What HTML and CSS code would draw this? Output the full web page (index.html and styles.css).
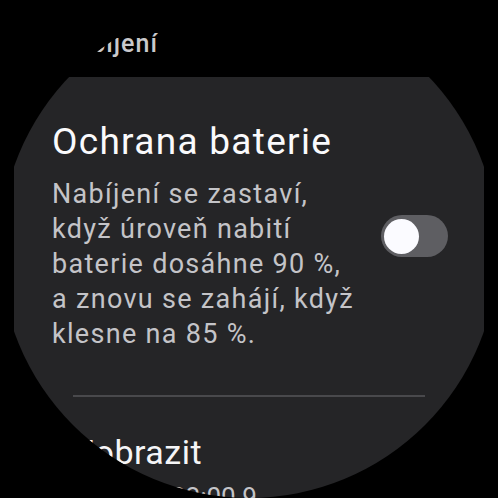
FILE: index.html
```html
<!DOCTYPE html>
<html lang="cs">
<head>
<meta charset="utf-8">
<title>Ochrana baterie</title>
<link rel="stylesheet" href="styles.css">
</head>
<body>
<div class="screen">
  <div class="header">Nabíjení</div>
  <div class="card">
    <div class="row">
      <div class="texts">
        <div class="title">Ochrana baterie</div>
        <div class="desc">Nabíjení se zastaví,<br>když úroveň nabití<br>baterie dosáhne 90 %,<br>a znovu se zahájí, když<br>klesne na 85 %.</div>
      </div>
      <div class="toggle"><div class="thumb"></div></div>
    </div>
    <div class="divider"></div>
    <div class="next">
      <div class="next-title">Zobrazit</div>
      <div class="next-sub">od 22:00 9</div>
    </div>
  </div>
</div>
</body>
</html>
```
FILE: styles.css
```css
html, body {
  margin: 0;
  padding: 0;
  background: #000;
}
.screen {
  width: 498px;
  height: 498px;
  border-radius: 50%;
  overflow: hidden;
  background: #000;
  font-family: Roboto, "Noto Sans", sans-serif;
}
.header {
  padding: 29px 0 0 58px;
  height: 77px;
  box-sizing: border-box;
  font-size: 25px;
  line-height: 30px;
  font-weight: 500;
  letter-spacing: 1px;
  color: #c9c9cc;
}
.card {
  margin: 0 14px;
  background: #252527;
  padding: 40px 0 0 38px;
  height: 500px;
  box-sizing: border-box;
}
.row {
  display: flex;
  align-items: center;
}
.texts {
  width: 329px;
}
.title {
  font-size: 37px;
  line-height: 50px;
  color: #fafafc;
  letter-spacing: 1.3px;
}
.desc {
  margin-top: 10px;
  font-size: 27px;
  line-height: 35px;
  color: #c4c4c8;
  letter-spacing: 1.3px;
}
.toggle {
  margin-top: 3px;
  width: 67px;
  height: 42px;
  border-radius: 21px;
  background: #5e5e62;
  display: flex;
  align-items: center;
  padding-left: 3px;
  box-sizing: border-box;
}
.thumb {
  width: 35px;
  height: 35px;
  border-radius: 50%;
  background: #fbfbff;
}
.divider {
  margin: 43px 59px 0 21px;
  height: 2px;
  background: #49494c;
}
.next {
  padding: 35px 0 0 22px;
}
.next-title {
  font-size: 34px;
  line-height: 40px;
  color: #f5f5f7;
  letter-spacing: 0.5px;
}
.next-sub {
  margin-top: 8px;
  padding-left: 61px;
  font-size: 26px;
  line-height: 34px;
  color: #c4c4c8;
}
```
